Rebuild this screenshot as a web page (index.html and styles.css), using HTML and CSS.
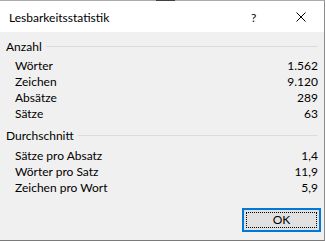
FILE: index.html
```html
<!DOCTYPE html>
<html lang="de">
<head>
  <meta charset="UTF-8">
  <title>Lesbarkeitsstatistik</title>
  <link rel="stylesheet" href="styles.css">
</head>
<body>
  <div class="dialog">
    <div class="titlebar">
      <span class="title">Lesbarkeitsstatistik</span>
      <span class="help">?</span>
      <svg class="close" width="10" height="10" viewBox="0 0 10 10">
        <path d="M0.5 0.5 L9.5 9.5 M9.5 0.5 L0.5 9.5" stroke="#000" stroke-width="1" fill="none"/>
      </svg>
    </div>

    <div class="content">
      <div class="group-head">Anzahl</div>
      <div class="rows">
        <div class="row"><span>Wörter</span><span>1.562</span></div>
        <div class="row"><span>Zeichen</span><span>9.120</span></div>
        <div class="row"><span>Absätze</span><span>289</span></div>
        <div class="row"><span>Sätze</span><span>63</span></div>
      </div>

      <div class="group-head second">Durchschnitt</div>
      <div class="rows rows-second">
        <div class="row"><span>Sätze pro Absatz</span><span>1,4</span></div>
        <div class="row"><span>Wörter pro Satz</span><span>11,9</span></div>
        <div class="row"><span>Zeichen pro Wort</span><span>5,9</span></div>
      </div>

      <div class="buttons">
        <button class="ok"><span>OK</span></button>
      </div>
    </div>
  </div>
</body>
</html>
```

FILE: styles.css
```css
body {
  margin: 0;
  background: #fff;
  font-family: Lato, "Segoe UI", sans-serif;
  font-size: 12px;
  color: #000;
}
.dialog {
  position: relative;
  width: 324px;
  height: 239px;
  border-top: 1px solid #ababab;
  border-right: 1px solid #8c8c8c;
  border-bottom: 1px solid #7a7a7a;
  display: flex;
  flex-direction: column;
}
.dialog::before {
  content: "";
  position: absolute;
  top: -1px;
  left: 156px;
  width: 19px;
  height: 1px;
  background: #404040;
}
.titlebar {
  height: 31px;
  background: #fff;
  display: flex;
  align-items: center;
}
.title {
  margin-left: 9px;
  flex: 1;
  line-height: 16px;
  padding-top: 2px;
}
.help {
  width: 8px;
  margin-right: 37px;
  line-height: 16px;
  padding-top: 2px;
}
.close {
  margin-right: 18px;
  margin-top: 1px;
}
.content {
  flex: 1;
  background: #f0f0f0;
  padding: 0 6px 0 6px;
  display: flex;
  flex-direction: column;
}
.group-head {
  display: flex;
  align-items: center;
  height: 16px;
  line-height: 16px;
  margin-top: 7px;
}
.group-head::after {
  content: "";
  flex: 1;
  height: 1px;
  background: #dcdcdc;
  margin-left: 4px;
  margin-top: -2px;
}
.group-head.second {
  margin-top: 6px;
}
.rows {
  margin-top: 3px;
  padding-left: 9px;
}
.rows-second {
  margin-top: 4px;
}
.row {
  display: flex;
  justify-content: space-between;
  height: 16px;
  line-height: 16px;
}
.buttons {
  margin-top: auto;
  margin-bottom: 8px;
  display: flex;
  justify-content: flex-end;
  margin-right: -3px;
}
.ok {
  width: 79px;
  height: 24px;
  background: #e1e1e1;
  border: 2px solid #0078d7;
  padding: 2px;
  font: inherit;
  color: #000;
  display: flex;
}
.ok span {
  flex: 1;
  border: 1px dotted #000;
  line-height: 14px;
}
```
